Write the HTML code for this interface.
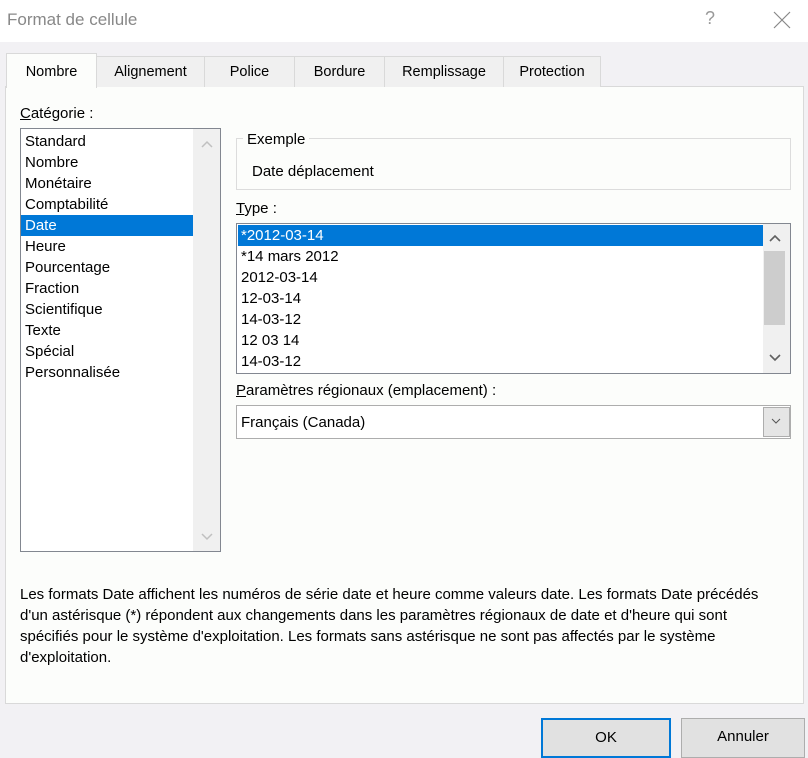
<!DOCTYPE html>
<html><head><meta charset="utf-8"><style>
*{box-sizing:border-box;margin:0;padding:0}
body{width:808px;height:750px;background:#f2f1f4;font-family:"Liberation Sans",sans-serif;font-size:15px;color:#000;position:relative;overflow:hidden}
.abs{position:absolute}
.title{left:0;top:0;width:808px;height:42px;background:#fff}
.tab{position:absolute;top:56px;height:31px;border:1px solid #d9d9d9;border-bottom:none;background:#f0f0f0;text-align:center;line-height:30px;font-size:14.5px}
.panel{left:5px;top:86px;width:799px;height:618px;background:#fcfdfb;border:1px solid #d9d9d9}
.item{position:absolute;left:4px;height:21px;line-height:21px}
.btn{position:absolute;top:718px;height:40px;background:#e1e1e1;border:1px solid #adadad;text-align:center;line-height:36px;font-size:15px}
</style></head><body>
<div class="abs title"></div>
<div class="abs" style="left:7px;top:10px;font-size:17px;color:#888">Format de cellule</div>
<div class="abs" style="left:705px;top:8px;font-size:18px;color:#999">?</div>
<svg class="abs" style="left:773px;top:11px" width="18" height="18"><path d="M1 1L17 17M17 1L1 17" stroke="#888" stroke-width="1.2"/></svg>

<div class="abs panel"></div>
<div class="tab" style="left:96px;width:109px">Alignement</div>
<div class="tab" style="left:204px;width:91px">Police</div>
<div class="tab" style="left:294px;width:91px">Bordure</div>
<div class="tab" style="left:384px;width:120px">Remplissage</div>
<div class="tab" style="left:503px;width:98px">Protection</div>
<div class="tab" style="left:6px;top:53px;width:91px;height:35px;background:#fcfdfb;line-height:36px">Nombre</div>

<div class="abs" style="left:20px;top:105px"><u>C</u>atégorie :</div>
<div class="abs" style="left:20px;top:128px;width:201px;height:424px;border:1px solid #828790;background:#fff">
 <div class="item" style="top:2px">Standard</div>
 <div class="item" style="top:23px">Nombre</div>
 <div class="item" style="top:44px">Monétaire</div>
 <div class="item" style="top:65px">Comptabilité</div>
 <div class="abs" style="left:0;top:86px;width:172px;height:21px;background:#0078d7"></div>
 <div class="item" style="top:86px;color:#fff">Date</div>
 <div class="item" style="top:107px">Heure</div>
 <div class="item" style="top:128px">Pourcentage</div>
 <div class="item" style="top:149px">Fraction</div>
 <div class="item" style="top:170px">Scientifique</div>
 <div class="item" style="top:191px">Texte</div>
 <div class="item" style="top:212px">Spécial</div>
 <div class="item" style="top:233px">Personnalisée</div>
 <div class="abs" style="left:172px;top:0;width:27px;height:422px;background:#f0f0f0"></div>
 <svg class="abs" style="left:179px;top:11px" width="14" height="10"><path d="M2 7L7 2L12 7" stroke="#c0c0c0" stroke-width="1.5" fill="none"/></svg>
 <svg class="abs" style="left:179px;top:403px" width="14" height="10"><path d="M2 2L7 7L12 2" stroke="#c0c0c0" stroke-width="1.5" fill="none"/></svg>
</div>

<div class="abs" style="left:236px;top:138px;width:555px;height:52px;border:1px solid #dcdcdc"></div>
<div class="abs" style="left:243px;top:131px;background:#fcfdfb;padding:0 4px">Exemple</div>
<div class="abs" style="left:252px;top:163px">Date déplacement</div>

<div class="abs" style="left:236px;top:200px"><u>T</u>ype :</div>
<div class="abs" style="left:236px;top:223px;width:555px;height:151px;border:1px solid #828790;background:#fff">
 <div class="abs" style="left:1px;top:1px;width:525px;height:21px;background:#0078d7"></div>
 <div class="item" style="top:1px;color:#fff">*2012-03-14</div>
 <div class="item" style="top:22px">*14 mars 2012</div>
 <div class="item" style="top:43px">2012-03-14</div>
 <div class="item" style="top:64px">12-03-14</div>
 <div class="item" style="top:85px">14-03-12</div>
 <div class="item" style="top:106px">12 03 14</div>
 <div class="item" style="top:127px">14-03-12</div>
 <div class="abs" style="left:526px;top:0;width:27px;height:149px;background:#f0f0f0"></div>
 <div class="abs" style="left:527px;top:27px;width:21px;height:74px;background:#cdcdcd"></div>
 <svg class="abs" style="left:531px;top:10px" width="14" height="10"><path d="M2 7L7 2L12 7" stroke="#606060" stroke-width="1.6" fill="none"/></svg>
 <svg class="abs" style="left:531px;top:129px" width="14" height="10"><path d="M2 2L7 7L12 2" stroke="#606060" stroke-width="1.6" fill="none"/></svg>
</div>

<div class="abs" style="left:236px;top:382px"><u>P</u>aramètres régionaux (emplacement) :</div>
<div class="abs" style="left:236px;top:405px;width:555px;height:34px;border:1px solid #adadad;background:#fff">
 <div class="item" style="top:6px">Français (Canada)</div>
 <div class="abs" style="left:526px;top:1px;width:27px;height:30px;background:#e5e5e5;border:1px solid #adadad"></div>
 <svg class="abs" style="left:533px;top:11px" width="12" height="8"><path d="M2 2L6 6L10 2" stroke="#555" stroke-width="1" fill="none"/></svg>
</div>

<div class="abs" style="left:20px;top:584px;width:785px;line-height:21px;font-size:15px;white-space:nowrap">Les formats Date affichent les numéros de série date et heure comme valeurs date. Les formats Date précédés<br>d'un astérisque (*) répondent aux changements dans les paramètres régionaux de date et d'heure qui sont<br>spécifiés pour le système d'exploitation. Les formats sans astérisque ne sont pas affectés par le système<br>d'exploitation.</div>

<div class="btn" style="left:541px;width:130px;border:2px solid #0078d7">OK</div>
<div class="btn" style="left:681px;width:124px">Annuler</div>
</body></html>
